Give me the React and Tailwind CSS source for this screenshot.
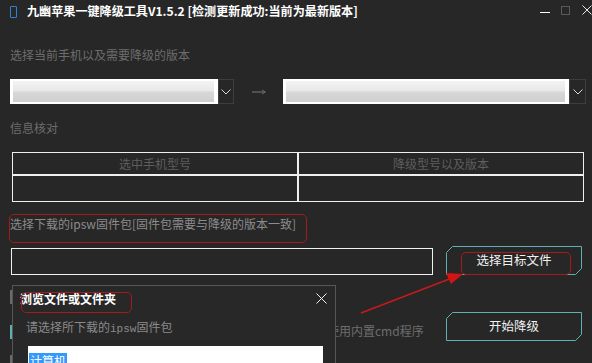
import React from "react";

const FONT = { fontFamily: '"Noto Sans CJK SC", "Noto Sans", sans-serif' };

function Dropdown({ width, whiteWidth }) {
  return (
    <div className="flex h-[25px]" style={{ width }}>
      <div className="h-full bg-white pl-[3px] pr-[4px] py-[2px]" style={{ width: whiteWidth }}>
        <div className="h-full w-full bg-[linear-gradient(#f3f3f3,#e8e8e8_48%,#d8d8d8_52%,#cfcfcf)]" />
      </div>
      <div className="flex-1 h-full border border-[#3e3e3e] flex items-center justify-center">
        <svg width="10" height="6" viewBox="0 0 10 6">
          <polyline points="0.5,0.5 5,5 9.5,0.5" fill="none" stroke="#d8d8d8" strokeWidth="1" />
        </svg>
      </div>
    </div>
  );
}

function ChamferButton({ children }) {
  return (
    <div className="relative w-[136px] h-[29px] flex items-center justify-center text-[12.5px] text-[#f0f0f0]">
      <svg className="absolute inset-0" width="136" height="29" viewBox="0 0 136 29">
        <polygon
          points="6.5,0.5 135.5,0.5 135.5,22.5 129.5,28.5 0.5,28.5 0.5,6.5"
          fill="none"
          stroke="#5fb0b5"
          strokeWidth="1"
        />
      </svg>
      <span className="relative">{children}</span>
    </div>
  );
}

export default function App() {
  return (
    <div className="relative w-[592px] h-[363px] overflow-hidden bg-[#272727] flex flex-col" style={FONT}>
      {/* Title bar */}
      <div className="h-[24px] flex items-center pl-[10px]">
        <div className="w-[7px] h-[12px] border-[1.5px] border-[#2f7fd6] rounded-[1px] mt-[-1px]" />
        <div className="ml-[10px] text-[12.1px] font-bold text-white leading-none mt-[-2px]">
          九幽苹果一键降级工具V1.5.2 [检测更新成功:当前为最新版本]
        </div>
        <div className="ml-auto flex items-center h-full">
          <div className="w-[10px] h-[1.5px] bg-white mt-[1px]" />
          <div className="ml-[11px] w-[9px] h-[9px] border border-[#5a5a5a] mt-[-4px]" />
          <svg className="ml-[12px] mt-[-4px]" width="10" height="10" viewBox="0 0 10 10">
            <path d="M0.5,0.5 L9.5,9.5 M9.5,0.5 L0.5,9.5" stroke="#e8e8e8" strokeWidth="1" />
          </svg>
        </div>
      </div>

      {/* Label 1 */}
      <div className="mt-[23px] h-[16px] pl-[10px] text-[12px] leading-[16px] text-[#6d6d6d]">
        选择当前手机以及需要降级的版本
      </div>

      {/* Dropdowns */}
      <div className="mt-[16px] flex items-center pl-[10px]">
        <Dropdown width={224} whiteWidth={208} />
        <div className="w-[49px] flex justify-center">
          <svg width="16" height="6" viewBox="0 0 16 6">
            <path d="M1,3 L14,3" stroke="#7a7a7a" strokeWidth="1" />
            <path d="M11,1 L14.5,3 L11,5" stroke="#6a6a6a" strokeWidth="1" fill="none" />
          </svg>
        </div>
        <Dropdown width={303} whiteWidth={286} />
      </div>

      {/* Label 2 */}
      <div className="mt-[16px] h-[16px] pl-[10px] text-[12px] leading-[16px] text-[#6d6d6d]">信息核对</div>

      {/* Table */}
      <div className="mt-[16px] ml-[12px] w-[572px] grid grid-cols-2 grid-rows-[23px_27px] text-[12px] text-[#5e5e5e]">
        <div className="border border-[#efefef] flex items-center justify-center">选中手机型号</div>
        <div className="border border-[#efefef] flex items-center justify-center">降级型号以及版本</div>
        <div className="border border-[#efefef]" />
        <div className="border border-[#efefef]" />
      </div>

      {/* Label 3 */}
      <div className="mt-[14px] h-[16px] pl-[10px] text-[12px] leading-[16px] text-[#8c8c8c]">
        选择下载的ipsw固件包[固件包需要与降级的版本一致]
      </div>

      {/* Input + button */}
      <div className="mt-[14px] flex items-start">
        <div className="ml-[11px] mt-[2px] w-[422px] h-[27px] border border-[#f0f0f0]" />
        <div className="ml-[13px]">
          <ChamferButton>选择目标文件</ChamferButton>
        </div>
      </div>

      {/* Row 2 */}
      <div className="mt-[37px] flex items-center h-[29px]">
        <div className="ml-[10px] mt-[10px] w-[14px] h-[14px] border-2 border-[#5fb0b5]" />
        <div className="ml-[303px] mt-[9px] text-[12px] text-[#6e6e6e] w-[119px]">使用内置cmd程序</div>
        <ChamferButton>开始降级</ChamferButton>
      </div>

      {/* Bits peeking out from behind the dialog */}
      <div className="absolute left-[10px] top-[290px] w-[2px] h-[14px] bg-[#6a6a6a]" />
      <div className="absolute left-[10px] top-[355px] w-[2px] h-[8px] bg-[#6a6a6a]" />

      {/* Dialog window */}
      <div className="absolute left-[12px] top-[285px] w-[324px] h-[90px] border border-[#575757] bg-[#282828] flex flex-col">
        <div className="flex items-center h-[26px] pl-[7px] pr-[8px]">
          <div className="text-[12px] font-bold text-white leading-none mt-[1px]">浏览文件或文件夹</div>
          <svg className="ml-auto mt-[1px]" width="11" height="11" viewBox="0 0 11 11">
            <path d="M0.5,0.5 L10.5,10.5 M10.5,0.5 L0.5,10.5" stroke="#f0f0f0" strokeWidth="1" />
          </svg>
        </div>
        <div className="mt-[8px] pl-[13px] text-[12px] leading-[16px] text-[#8a8a8a]">
          请选择所下载的<span style={{ fontFamily: '"Liberation Mono", monospace' }} className="text-[11px]">ipsw</span>固件包
        </div>
        <div className="mt-[9px] ml-[15px] w-[295px] h-[30px] bg-white pl-[1px] pt-[1px]">
          <span className="inline-block bg-[#3399ff] text-white text-[12px] leading-[15px] px-[1px]">计算机</span>
        </div>
      </div>

      {/* Annotations: red rounded rectangles and arrow */}
      <div className="absolute left-[9px] top-[214px] w-[298px] h-[29px] border-[1.5px] border-[#a51a1a] rounded-[5px]" />
      <div className="absolute left-[461px] top-[252px] w-[110px] h-[23px] border-[1.5px] border-[#a51a1a] rounded-[5px]" />
      <div className="absolute left-[21px] top-[292px] w-[111px] h-[21px] border-[1.5px] border-[#a51a1a] rounded-[5px]" />
      <svg className="absolute left-0 top-0 pointer-events-none" width="592" height="363" viewBox="0 0 592 363">
        <line x1="361" y1="313" x2="452" y2="278" stroke="#c8191c" strokeWidth="1.5" />
        <polygon points="463,274 446,273 451,284" fill="#d41414" />
      </svg>
    </div>
  );
}
